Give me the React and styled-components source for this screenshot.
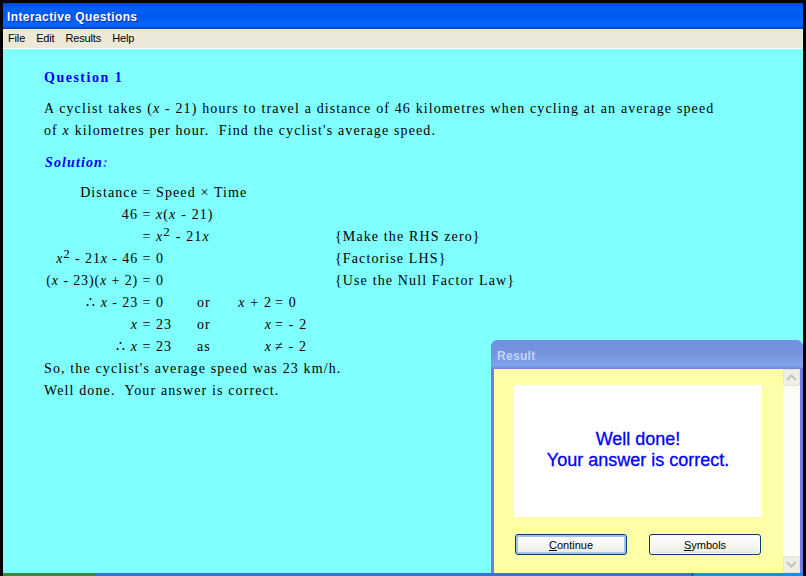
import React from "react";
import styled, { createGlobalStyle } from "styled-components";

const GlobalStyle = createGlobalStyle`
  html, body {
    margin: 0;
    padding: 0;
    background: #000;
    overflow: hidden;
  }
`;

const Chevron = ({ up }) => (
  <svg width="11" height="7" viewBox="0 0 11 7">
    <path
      d={up ? "M1 6 L5.5 1.5 L10 6" : "M1 1 L5.5 5.5 L10 1"}
      fill="none"
      stroke="#c4c4bc"
      strokeWidth="2"
    />
  </svg>
);

const X = styled.i`
  font-style: italic;
`;

const App = () => {
  return (
    <>
      <GlobalStyle />
      <Screen>
        <Window>
          <TitleBar>Interactive Questions</TitleBar>
          <MenuBar>
            <MenuItem>File</MenuItem>
            <MenuItem>Edit</MenuItem>
            <MenuItem>Results</MenuItem>
            <MenuItem>Help</MenuItem>
          </MenuBar>
          <Content>
            <Heading>Question 1</Heading>
            <Paragraph>
              <Line>
                A cyclist takes (<X>x</X> - 21) hours to travel a distance of 46 kilometres when cycling at an average speed
              </Line>
              <Line>
                of <X>x</X> kilometres per hour.&nbsp; Find the cyclist's average speed.
              </Line>
            </Paragraph>
            <SolutionHeading>Solution<Colon>:</Colon></SolutionHeading>
            <Working>
              <Lhs>Distance</Lhs><Eq>=</Eq><Rhs>Speed × Time</Rhs><Comment />
              <Lhs>46</Lhs><Eq>=</Eq><Rhs><X>x</X>(<X>x</X> - 21)</Rhs><Comment />
              <Lhs />
              <Eq>=</Eq><Rhs><X>x</X><Power>2</Power> - 21<X>x</X></Rhs><Comment>{"{"}Make the RHS zero{"}"}</Comment>
              <Lhs $tight><X>x</X><Power>2</Power> - 21<X>x</X> - 46</Lhs><Eq>=</Eq><Rhs>0</Rhs><Comment>{"{"}Factorise LHS{"}"}</Comment>
              <Lhs $tight>(<X>x</X> - 23)(<X>x</X> + 2)</Lhs><Eq>=</Eq><Rhs>0</Rhs><Comment>{"{"}Use the Null Factor Law{"}"}</Comment>

              <Lhs $tight>∴ <X>x</X> - 23</Lhs><Eq>=</Eq><Value>0</Value><Conj>or</Conj><Lhs2><X>x</X> + 2</Lhs2><Value2>= 0</Value2>
              <Lhs><X>x</X></Lhs><Eq>=</Eq><Value>23</Value><Conj>or</Conj><Lhs2><X>x</X></Lhs2><Value2>= - 2</Value2>
              <Lhs>∴ <X>x</X></Lhs><Eq>=</Eq><Value>23</Value><Conj>as</Conj><Lhs2><X>x</X></Lhs2><Value2>≠ - 2</Value2>
            </Working>
            <Line>So, the cyclist's average speed was 23 km/h.</Line>
            <Line>Well done.&nbsp; Your answer is correct.</Line>
          </Content>
          <Taskbar>
            <TaskStart />
            <TaskBand />
            <TaskTray />
          </Taskbar>
          <Dialog>
            <DialogTitle>Result</DialogTitle>
            <DialogBody>
              <DialogMain>
                <Message>
                  Well done!
                  <br />
                  Your answer is correct.
                </Message>
                <Buttons>
                  <Button $focused><u>C</u>ontinue</Button>
                  <Button><u>S</u>ymbols</Button>
                </Buttons>
              </DialogMain>
              <ScrollBar>
                <ScrollButton><Chevron up /></ScrollButton>
                <ScrollButton><Chevron /></ScrollButton>
              </ScrollBar>
            </DialogBody>
          </Dialog>
        </Window>
      </Screen>
    </>
  );
};

const Screen = styled.div`
  width: 806px;
  height: 576px;
  padding: 3px 3px 0;
  box-sizing: border-box;
  background: #000;
`;

const Window = styled.div`
  position: relative;
  height: 573px;
  display: flex;
  flex-direction: column;
  overflow: hidden;
`;

const TitleBar = styled.div`
  height: 26px;
  padding-left: 4px;
  color: #fff;
  font: bold 12px/28px "Liberation Sans", sans-serif;
  letter-spacing: 0.4px;
  text-shadow: 1px 1px 0 #0f2f9a;
  background: linear-gradient(to bottom, #0048d8 0%, #0060f4 20%, #0058ee 50%, #0068ff 85%, #0040c8 100%);
`;

const MenuBar = styled.div`
  height: 17px;
  display: flex;
  gap: 11px;
  padding: 0 0 2px 5px;
  align-items: center;
  background: #ece9d8;
  border-bottom: 1px solid #fff;
  font: 11px "Liberation Sans", sans-serif;
  letter-spacing: -0.15px;
  color: #000;
`;

const MenuItem = styled.span``;

const Content = styled.div`
  flex: 1;
  min-height: 0;
  padding: 18px 0 0 41px;
  background: #80ffff;
  font: 14px/22px "Liberation Serif", serif;
  letter-spacing: 1.11px;
  word-spacing: 0.1px;
  color: #000;
`;

const Heading = styled.div`
  color: #0000ff;
  font-weight: bold;
  letter-spacing: 1.5px;
  margin-bottom: 9px;
`;

const Paragraph = styled.div`
  margin-bottom: 10px;
`;

const Line = styled.div`
  white-space: nowrap;
`;

const SolutionHeading = styled.div`
  color: #0000ff;
  font-weight: bold;
  font-style: italic;
  padding-left: 1px;
  margin-bottom: 8px;
`;

const Colon = styled.span`
  color: #3a6cff;
`;

const Working = styled.div`
  display: grid;
  grid-template-columns: 94px 18px 41px 41px 34px 63px 1fr;
  grid-auto-rows: 22px;
`;

const Lhs = styled.div`
  grid-column: 1;
  text-align: right;
  white-space: nowrap;
  letter-spacing: ${(props) => (props.$tight ? "0.85px" : "inherit")};
`;

const Eq = styled.div`
  grid-column: 2;
  text-align: center;
`;

const Rhs = styled.div`
  grid-column: 3 / 7;
  white-space: nowrap;
`;

const Value = styled.div`
  grid-column: 3;
`;

const Conj = styled.div`
  grid-column: 4;
`;

const Lhs2 = styled.div`
  grid-column: 5;
  text-align: right;
  white-space: nowrap;
`;

const Value2 = styled.div`
  grid-column: 6;
  padding-left: 3px;
  white-space: pre;
`;

const Comment = styled.div`
  grid-column: 7;
  white-space: nowrap;
`;

const Power = styled.sup`
  font-size: 13px;
  line-height: 0;
  vertical-align: 5px;
`;

const Taskbar = styled.div`
  height: 3px;
  flex: none;
  display: flex;
`;

const TaskStart = styled.div`
  width: 93px;
  background: #3c8a3c;
`;

const TaskBand = styled.div`
  width: 596px;
  background: #2f74e0;
  border-right: 1px solid #123a70;
`;

const TaskTray = styled.div`
  flex: 1;
  background: #1290e4;
`;

const Dialog = styled.div`
  position: absolute;
  left: 488px;
  top: 337px;
  width: 312px;
  height: 233px;
  display: flex;
  flex-direction: column;
  border-radius: 7px 7px 0 0;
  background: #6d80e0;
  overflow: hidden;
`;

const DialogTitle = styled.div`
  height: 29px;
  padding: 0 0 0 6px;
  font: bold 12px/33px "Liberation Sans", sans-serif;
  letter-spacing: 0.3px;
  color: #c5d4f5;
  background: linear-gradient(to bottom, #7090e0 0%, #7694dd 45%, #7ea4e8 88%, #7084e0 100%);
`;

const DialogBody = styled.div`
  flex: 1;
  display: flex;
  margin: 0 3px;
  min-height: 0;
`;

const DialogMain = styled.div`
  flex: 1;
  display: flex;
  flex-direction: column;
  padding: 16px 21px 0 20px;
  background: #ffffa8;
`;

const Message = styled.div`
  height: 130px;
  padding-bottom: 2px;
  display: flex;
  flex-direction: column;
  align-items: center;
  justify-content: center;
  text-align: center;
  background: #fff;
  color: #0000ff;
  font: 18px/21px "Liberation Sans", sans-serif;
  -webkit-text-stroke: 0.3px #0000ff;
`;

const Buttons = styled.div`
  display: flex;
  justify-content: space-between;
  padding: 17px 1px 0;
`;

const Button = styled.button`
  width: 112px;
  height: 21px;
  padding: 0;
  border: 1px solid #003c74;
  border-radius: 3px;
  background: linear-gradient(to bottom, #fff, #f0f0ea 85%, #dcdcd2);
  box-shadow: ${(props) => (props.$focused ? "inset 0 0 0 2px #a8c0ee" : "inset 0 0 0 1px #fff")};
  font: 11px "Liberation Sans", sans-serif;
  color: #000;
`;

const ScrollBar = styled.div`
  width: 17px;
  display: flex;
  flex-direction: column;
  justify-content: space-between;
  background: #fdfdf8;
`;

const ScrollButton = styled.div`
  height: 17px;
  display: flex;
  align-items: center;
  justify-content: center;
  border: 1px solid #e4e3d8;
  border-radius: 2px;
  box-sizing: border-box;
  background: #f0efe6;
`;

export default App;
